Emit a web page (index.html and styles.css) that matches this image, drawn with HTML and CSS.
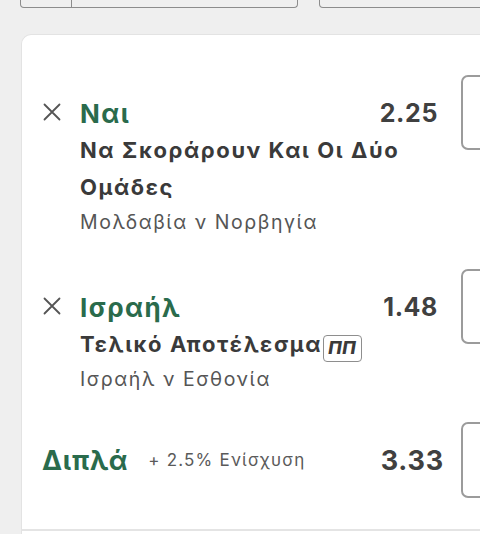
FILE: index.html
```html
<!DOCTYPE html>
<html lang="el">
<head>
<meta charset="utf-8">
<link rel="stylesheet" href="styles.css">
</head>
<body>
<div class="tabs">
  <div class="tab tab-split"><span class="seg seg-first"></span><span class="seg"></span></div>
  <div class="tab tab-wide"></div>
</div>
<div class="card">
  <div class="selection">
    <div class="head">
      <span class="remove"><svg width="18" height="18" viewBox="0 0 18 18"><path d="M1.5 1.5 L16.5 16.5 M16.5 1.5 L1.5 16.5" stroke="#555" stroke-width="1.8" fill="none" stroke-linecap="round"/></svg></span>
      <span class="name">Ναι</span>
      <span class="odds">2.25</span>
      <span class="stake"></span>
    </div>
    <div class="details">
      <div class="market">Να Σκοράρουν Και Οι Δύο Ομάδες</div>
      <div class="event">Μολδαβία ν Νορβηγία</div>
    </div>
  </div>
  <div class="selection selection-next">
    <div class="head">
      <span class="remove"><svg width="18" height="18" viewBox="0 0 18 18"><path d="M1.5 1.5 L16.5 16.5 M16.5 1.5 L1.5 16.5" stroke="#555" stroke-width="1.8" fill="none" stroke-linecap="round"/></svg></span>
      <span class="name">Ισραήλ</span>
      <span class="odds">1.48</span>
      <span class="stake"></span>
    </div>
    <div class="details">
      <div class="market">Τελικό Αποτέλεσμα<span class="badge">ΠΠ</span></div>
      <div class="event">Ισραήλ ν Εσθονία</div>
    </div>
  </div>
  <div class="multiple">
    <div class="head">
      <span class="multi-name">Διπλά</span>
      <span class="boost">+ 2.5% Ενίσχυση</span>
      <span class="odds odds-total">3.33</span>
      <span class="stake stake-total"></span>
    </div>
  </div>
  <div class="divider"></div>
</div>
</body>
</html>
```
FILE: styles.css
```css
html, body {
  margin: 0;
  padding: 0;
  overflow: hidden;
}
body {
  width: 480px;
  height: 534px;
  background: #efefef;
  font-family: Inter, "Noto Sans", "DejaVu Sans", sans-serif;
  color: #3a3a3a;
}
.tabs {
  display: flex;
  align-items: flex-end;
  gap: 21px;
  height: 8px;
  padding-left: 20px;
}
.tab {
  box-sizing: border-box;
  height: 8px;
  border: 1.5px solid #8c8c8c;
  border-top: none;
  border-radius: 0 0 4px 4px;
}
.tab-split {
  width: 278px;
  display: flex;
}
.seg {
  flex: 1;
}
.seg-first {
  flex: none;
  width: 50px;
  border-right: 1.5px solid #8c8c8c;
}
.tab-wide {
  flex: 1;
  margin-right: -10px;
}
.card {
  box-sizing: border-box;
  margin-top: 26px;
  margin-left: 21px;
  width: 480px;
  height: 510px;
  background: #fff;
  border-top: 1px solid #e3e3e3;
  border-left: 1px solid #e3e3e3;
  border-radius: 10px 0 0 0;
  padding-top: 61px;
}
.selection {
  padding-left: 19px;
}
.selection-next {
  margin-top: 51px;
}
.head {
  display: flex;
  align-items: center;
  height: 32px;
}
.remove {
  flex: none;
  width: 39px;
  display: flex;
  align-items: center;
  padding-left: 2px;
  box-sizing: border-box;
}
.remove svg {
  display: block;
}
.name {
  flex: 1;
  font-size: 26px;
  font-weight: 700;
  letter-spacing: 1.4px;
  color: #2a6b4c;
  line-height: 32px;
  padding-top: 3px;
}
.odds {
  flex: none;
  font-size: 25px;
  font-weight: 700;
  letter-spacing: 0.6px;
  color: #404040;
  margin-right: 23px;
  line-height: 32px;
  padding-top: 2px;
}
.stake {
  flex: none;
  box-sizing: border-box;
  width: 40px;
  height: 75px;
  border: 2px solid #9b9b9b;
  border-radius: 7px;
}
.details {
  padding-left: 39px;
  padding-top: 4px;
}
.market {
  font-size: 22px;
  font-weight: 700;
  letter-spacing: 1.6px;
  line-height: 37px;
  color: #3a3a3a;
  max-width: 360px;
}
.badge {
  display: inline-block;
  box-sizing: border-box;
  height: 27px;
  margin-left: 1px;
  padding: 0 5px 0 4px;
  border: 1.5px solid #8e8e8e;
  border-radius: 4px;
  font-size: 18px;
  font-style: italic;
  font-weight: 800;
  letter-spacing: 0.5px;
  line-height: 24px;
  vertical-align: -2px;
  color: #3a3a3a;
}
.event {
  font-size: 19.5px;
  letter-spacing: 1.55px;
  line-height: 33px;
  color: #555;
}
.multiple {
  margin-top: 48px;
  padding-left: 20px;
}
.multi-name {
  flex: none;
  font-size: 27px;
  font-weight: 700;
  letter-spacing: 0.8px;
  color: #2a6b4c;
  line-height: 32px;
  padding-top: 2px;
}
.boost {
  flex: 1;
  margin-left: 20px;
  font-size: 17px;
  letter-spacing: 1.2px;
  color: #5a5a5a;
  line-height: 32px;
}
.odds-total {
  font-size: 27px;
  letter-spacing: 0.8px;
  margin-right: 17px;
}
.stake-total {
  height: 76px;
}
.divider {
  margin-top: 53px;
  border-top: 2px solid #e4e4e4;
}
```
